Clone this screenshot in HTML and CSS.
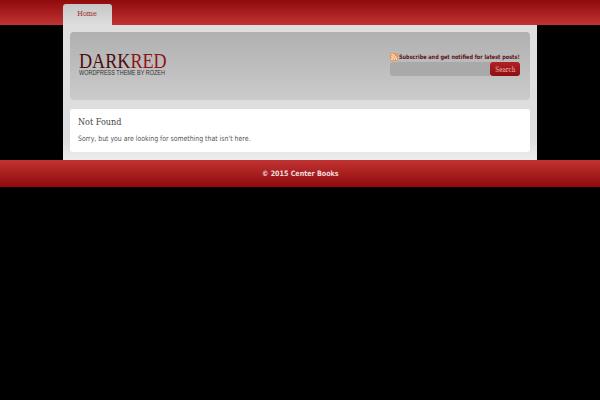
FILE: index.html
```html
<!DOCTYPE html>
<html lang="en">
    <head>
        <meta charset="UTF-8">
        <title>Center Books</title>
        <link rel="stylesheet" href="styles.css">
    </head>
    <body>
        <div class="topbar">
            <div class="nav">
                <a class="tab" href="#"><span>Home</span></a>
            </div>
        </div>
        <div class="wrap">
            <div class="header">
                <div class="logo">
                    <div class="logo_name">DARK<span>RED</span></div>
                    <div class="logo_sub">WORDPRESS THEME BY ROZEH</div>
                </div>
                <div class="sub">
                    <div class="sub_text">
                        <svg class="rss" width="8" height="8" viewBox="0 0 9 9">
                            <rect width="9" height="9" rx="1" fill="#e8995a"/>
                            <circle cx="2.2" cy="6.8" r="1" fill="#fff"/>
                            <path d="M1.4 3.9a3.8 3.8 0 0 1 3.8 3.8M1.4 1.7a6 6 0 0 1 6 6" fill="none" stroke="#fff" stroke-width="1"/>
                        </svg>
                        <span>Subscribe and get notified for latest posts!</span>
                    </div>
                    <div class="search">
                        <input class="search_input" type="text">
                        <button class="search_btn"><span>Search</span></button>
                    </div>
                </div>
            </div>
            <div class="content">
                <h2>Not Found</h2>
                <p>Sorry, but you are looking for something that isn't here.</p>
            </div>
        </div>
        <div class="footer"><span>© 2015 Center Books</span></div>
    </body>
</html>
```
FILE: styles.css
```css
* {
    box-sizing: border-box;
}
body {
    margin: 0;
    background: #000;
    font-family: "DejaVu Sans", sans-serif;
}
.topbar {
    height: 25px;
    background: linear-gradient(#8f0a0c, #c13333);
}
.nav {
    width: 474px;
    height: 25px;
    margin: 0 auto;
    padding-top: 4px;
}
.tab {
    display: block;
    width: 49px;
    height: 21px;
    padding-top: 5px;
    border-radius: 3px 3px 0 0;
    background: linear-gradient(#c6c6c6, #dedede);
    color: #a01c1e;
    font-family: "DejaVu Serif", serif;
    font-size: 8px;
    line-height: 10px;
    text-align: center;
    text-decoration: none;
}
.tab span {
    display: inline-block;
    transform: scaleX(.81);
}
.wrap {
    width: 474px;
    height: 135px;
    margin: 0 auto;
    padding: 7px;
    background: linear-gradient(#dedede 85%, #ededed);
}
.header {
    display: flex;
    justify-content: space-between;
    height: 68px;
    padding: 20px 10px 0 9px;
    border-radius: 4px;
    background: linear-gradient(#b0b0b0, #cbcbcb);
}
.logo_name {
    color: #4a0d0f;
    font-family: "Liberation Serif", serif;
    font-size: 20.5px;
    line-height: 18px;
    transform: scaleX(.885);
    transform-origin: left;
}
.logo_name span {
    color: #8e1416;
}
.logo_sub {
    color: #333;
    font-family: "Liberation Sans", sans-serif;
    font-size: 6.5px;
    line-height: 6px;
    white-space: nowrap;
    transform: scaleX(.843);
    transform-origin: left;
}
.sub {
    width: 130px;
}
.sub_text {
    display: flex;
    align-items: center;
    height: 9px;
    color: #5a1416;
    font-size: 6px;
    font-weight: bold;
    white-space: nowrap;
}
.sub_text span {
    transform: scaleX(.825);
    transform-origin: left;
}
.rss {
    margin-right: 1px;
    flex: none;
}
.search {
    display: flex;
    margin-top: 1px;
}
.search_input {
    width: 100px;
    height: 14px;
    padding: 0;
    border: 0;
    border-radius: 3px 0 0 3px;
    background: #a9a9a9;
}
.search_btn {
    width: 30px;
    height: 14px;
    padding: 0;
    border: 0;
    border-radius: 3px;
    background: linear-gradient(#b12224, #8f0f11);
    color: #eebbbb;
    font-family: "DejaVu Serif", serif;
    font-size: 7.5px;
}
.search_btn span {
    display: inline-block;
    transform: scaleX(.75);
}
.content {
    height: 43px;
    margin-top: 9px;
    padding: 7px 8px;
    border-radius: 3px;
    background: #fff;
}
h2 {
    margin: 0;
    color: #444;
    font-family: "DejaVu Serif", serif;
    font-size: 9.6px;
    font-weight: normal;
    line-height: 12px;
    transform: scaleX(.844);
    transform-origin: left;
}
p {
    margin: 6px 0 0;
    color: #555;
    font-size: 7.4px;
    line-height: 10px;
    white-space: nowrap;
    transform: scaleX(.835);
    transform-origin: left;
}
.footer {
    height: 27px;
    background: linear-gradient(#c13333, #8f0a0c);
    color: #f0dada;
    font-size: 7.4px;
    font-weight: bold;
    line-height: 27px;
    text-align: center;
}
.footer span {
    display: inline-block;
    transform: scaleX(.864);
}
```
